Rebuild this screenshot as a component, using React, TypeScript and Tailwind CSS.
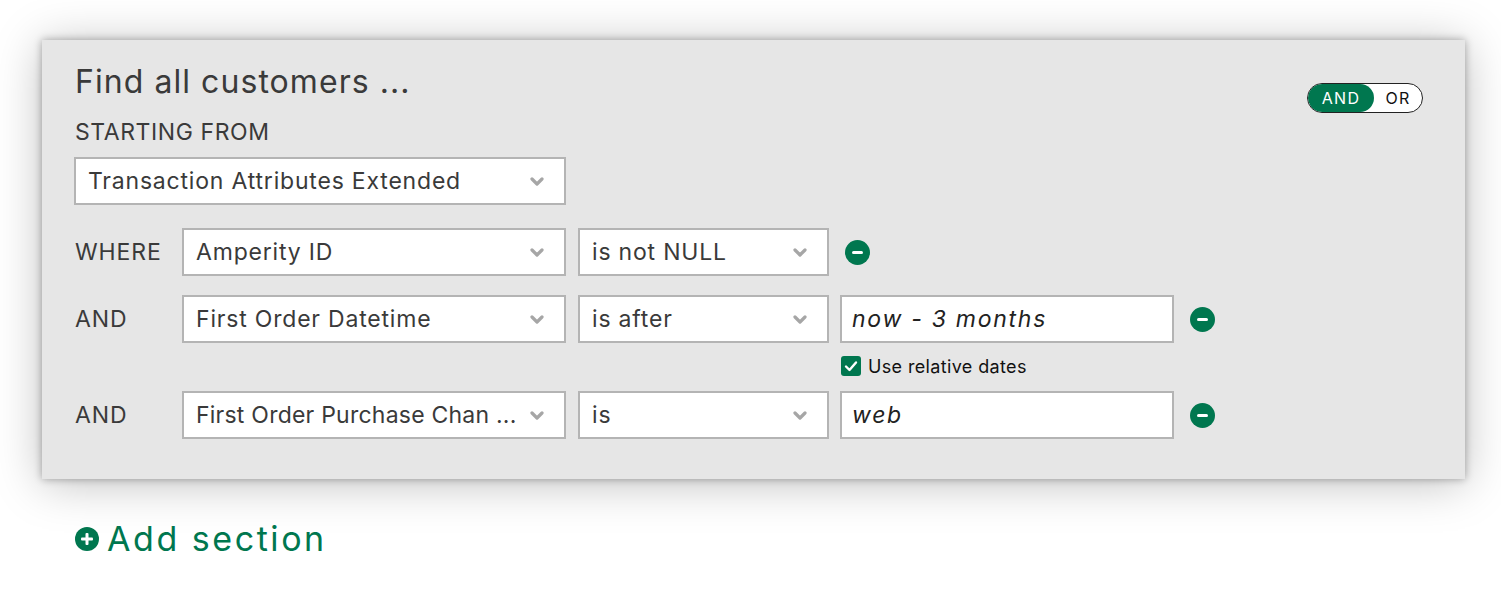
import React from 'react'

const font = { fontFamily: 'Inter, "Noto Sans", sans-serif' }

function Chevron() {
  return (
    <svg width="14" height="9" viewBox="0 0 14 9" className="shrink-0">
      <path d="M2 2 L7 7 L12 2" fill="none" stroke="#a6a6a6" strokeWidth="3.2" strokeLinecap="round" strokeLinejoin="round" />
    </svg>
  )
}

function MinusButton() {
  return (
    <svg width="25" height="25" viewBox="0 0 25 25" className="shrink-0">
      <circle cx="12.5" cy="12.5" r="12.5" fill="#00774f" />
      <rect x="7" y="11" width="11" height="3" rx="1.5" fill="#fff" />
    </svg>
  )
}

function Select({ value, width, tight }: { value: string; width: string; tight?: boolean }) {
  return (
    <div className={`${width} h-[48px] shrink-0 border-2 border-[#b4b4b4] bg-white flex items-center justify-between pl-[12px] pr-[20px]`}>
      <span className={`text-[23px] ${tight ? 'tracking-[0.01em]' : 'tracking-[0.035em]'} text-[#3a3a3a] whitespace-nowrap`}>{value}</span>
      <Chevron />
    </div>
  )
}

function TextInput({ value }: { value: string }) {
  return (
    <div className="w-[334px] h-[48px] shrink-0 border-2 border-[#b4b4b4] bg-white flex items-center pl-[10px]">
      <span className="text-[23px] italic tracking-[0.075em] text-[#222]">{value}</span>
    </div>
  )
}

function Row({ label, children }: { label: string; children: React.ReactNode }) {
  return (
    <div className="flex items-center">
      <div className="w-[108px] shrink-0 pl-[1px] text-[23px] tracking-[0.04em] text-[#3a3a3a]">{label}</div>
      {children}
    </div>
  )
}

export default function App() {
  return (
    <div className="min-h-screen bg-white pt-[40px] pl-[42px]" style={font}>
      <div className="relative w-[1423px] bg-[#e6e6e6] pl-[32px] pt-[26px] pb-[40px] shadow-[0_0_8px_rgba(0,0,0,0.32),0_4px_44px_rgba(0,0,0,0.25)]">
        <div className="absolute top-[43px] right-[42px] flex h-[30px] w-[116px] rounded-full border border-[#222] bg-white overflow-hidden">
          <div className="flex w-[66px] items-center justify-center rounded-full bg-[#00774f] text-[16px] text-white tracking-[0.08em]">AND</div>
          <div className="flex flex-1 items-center justify-center text-[16px] text-[#111] tracking-[0.08em]">OR</div>
        </div>

        <h1 className="pl-[1px] text-[32px] leading-[32px] tracking-[0.033em] text-[#3a3a3a]">Find all customers ...</h1>
        <div className="mt-[22px] pl-[1px] text-[23px] leading-[24px] tracking-[0.025em] text-[#3a3a3a]">STARTING FROM</div>
        <div className="mt-[13px]">
          <Select value="Transaction Attributes Extended" width="w-[492px]" />
        </div>

        <div className="mt-[23px]">
          <Row label="WHERE">
            <Select value="Amperity ID" width="w-[384px]" />
            <div className="w-[12px]" />
            <Select value="is not NULL" width="w-[251px]" />
            <div className="w-[16px]" />
            <MinusButton />
          </Row>
        </div>

        <div className="mt-[19px]">
          <Row label="AND">
            <Select value="First Order Datetime" width="w-[384px]" />
            <div className="w-[12px]" />
            <Select value="is after" width="w-[251px]" />
            <div className="w-[11px]" />
            <TextInput value="now - 3 months" />
            <div className="w-[16px]" />
            <MinusButton />
          </Row>
        </div>

        <div className="mt-[13px] flex h-[20px] items-center pl-[767px]">
          <div className="flex h-[20px] w-[20px] items-center justify-center rounded-[3px] bg-[#00774f]">
            <svg width="14" height="12" viewBox="0 0 14 12">
              <path d="M2 6.5 L5.5 10 L12 2.5" fill="none" stroke="#fff" strokeWidth="2.4" strokeLinecap="round" strokeLinejoin="round" />
            </svg>
          </div>
          <span className="ml-[7px] text-[18px] tracking-[0.02em] text-[#111]">Use relative dates</span>
        </div>

        <div className="mt-[15px]">
          <Row label="AND">
            <Select value="First Order Purchase Chan ..." width="w-[384px]" tight />
            <div className="w-[12px]" />
            <Select value="is" width="w-[251px]" />
            <div className="w-[11px]" />
            <TextInput value="web" />
            <div className="w-[16px]" />
            <MinusButton />
          </Row>
        </div>
      </div>

      <div className="mt-[40px] ml-[33px] flex items-center gap-[8px] text-[#00774f]">
        <svg width="24" height="24" viewBox="0 0 24 24">
          <circle cx="12" cy="12" r="12" fill="#00774f" />
          <rect x="6" y="10.5" width="12" height="3" rx="1" fill="#fff" />
          <rect x="10.5" y="6" width="3" height="12" rx="1" fill="#fff" />
        </svg>
        <span className="text-[34px] leading-[40px] tracking-[0.075em]">Add section</span>
      </div>
    </div>
  )
}
